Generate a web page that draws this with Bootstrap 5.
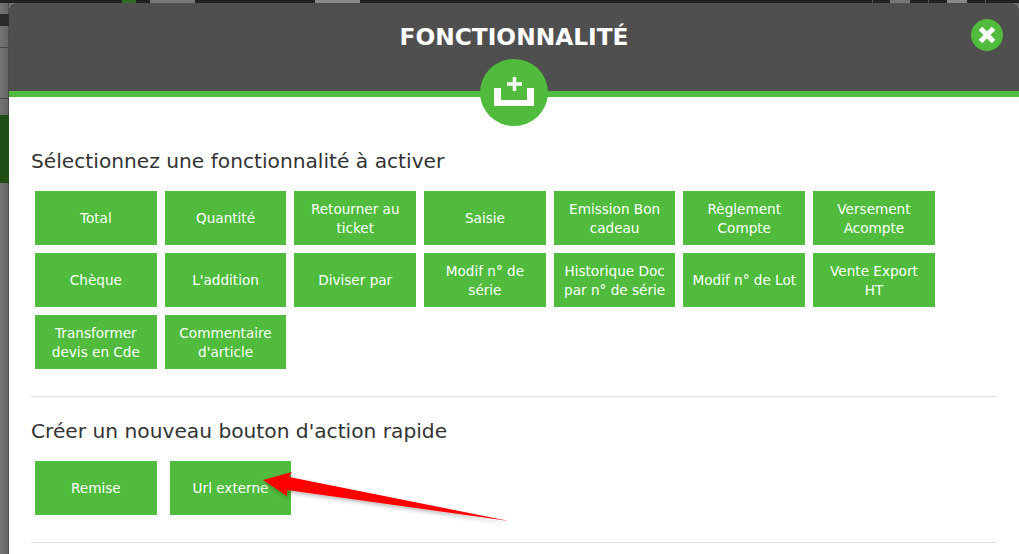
<!DOCTYPE html>
<html lang="fr">
<head>
<meta charset="utf-8">
<title>Fonctionnalité</title>
<link href="https://cdn.jsdelivr.net/npm/bootstrap@5.3.0/dist/css/bootstrap.min.css" rel="stylesheet">
<style>
html,body{height:100%;overflow:hidden}
body{background:#6b6b6b;font-family:"DejaVu Sans",sans-serif;color:#333}
.topstrip{height:3px;background:linear-gradient(90deg,#222 0 122px,#2f6b22 122px 136px,#222 136px 150px,#777 150px 195px,#222 195px 315px,#888 315px 360px,#222 360px 872px,#555 872px 873px,#222 873px 890px,#777 890px 910px,#222 910px 928px,#555 928px 929px,#222 929px 947px,#888 947px 967px,#222 967px 985px,#555 985px 986px,#222 986px)}
.sidebar-bg{width:9px;flex:none;background:linear-gradient(90deg,#747474,#666 85%,#3c3c3c)}
.band{background:#2a2a2a;height:12px;margin-top:11px}
.thin1{height:1px;background:#444;margin-top:21px}
.thin2{height:1px;background:#444;margin-top:50px}
.band-green{background:#1f4f14;height:68px;margin-top:16px}
.dialog{background:#fff;border-radius:6px 6px 0 0;flex:1 1 auto;min-width:0}
.dialog-head{height:94px;background:#4f4f4f;border-bottom:6px solid #50bb3d;border-radius:6px 6px 0 0;position:relative}
.dialog-title{font-size:23.3px;font-weight:700;color:#fff;line-height:26px;padding-top:21px;margin:0}
.close-disc,.head-disc{position:absolute;background:#50bb3d;border-radius:50%}
.close-disc{width:32px;height:32px;top:16px;right:16px;padding:0;border:0}
.head-disc{width:68px;height:67px;left:471px;top:56px}
.dialog-body{padding:0 22px}
.sec-title{font-size:20.2px;line-height:24px;font-weight:400;color:#333;margin:0}
.sec-first{padding-top:52px}
.sec-next{margin-top:22px}
.tile-grid{display:flex;flex-wrap:wrap;gap:8px;padding-left:4px;margin-top:18px}
.tile-grid-wide{gap:13px}
.tile{width:121.7px;height:54px;background:#50bb3d;color:#fff;font-size:13.6px;line-height:19px;border:0;border-radius:0;padding:1px 7px 0;display:flex;align-items:center;justify-content:center;text-align:center}
.rule{border-top:1px solid #ddd;opacity:1;margin:27px 0 0}
.arrow{position:absolute;left:0;top:0;pointer-events:none}
</style>
</head>
<body class="d-flex flex-column">
<div class="topstrip"></div>
<div class="d-flex flex-grow-1">
<div class="sidebar-bg"><div class="band"></div><div class="thin1"></div><div class="thin2"></div><div class="band-green"></div></div>
<div class="dialog">
<div class="dialog-head text-center">
<h1 class="dialog-title">FONCTIONNALITÉ</h1>
<button class="close-disc" aria-label="Fermer"><svg width="32" height="32" viewBox="0 0 32 32"><path d="M9.500 9.500 22.500 22.500M22.500 9.500 9.500 22.500" stroke="#fff" stroke-width="5" fill="none"/></svg></button>
<div class="head-disc"><svg width="68" height="67" viewBox="0 0 68 67"><path d="M14 29h7v12h26V29h7v18H14z" fill="#fff"/><path d="M27 25h15M34.500 18v14" stroke="#fff" stroke-width="3.500" fill="none"/></svg></div>
</div>
<div class="dialog-body">
<h2 class="sec-title sec-first">Sélectionnez une fonctionnalité à activer</h2>
<div class="tile-grid">
<button class="tile">Total</button><button class="tile">Quantité</button><button class="tile">Retourner au ticket</button><button class="tile">Saisie</button><button class="tile">Emission Bon cadeau</button><button class="tile">Règlement Compte</button><button class="tile">Versement Acompte</button>
<button class="tile">Chèque</button><button class="tile">L'addition</button><button class="tile">Diviser par</button><button class="tile">Modif n° de série</button><button class="tile">Historique Doc par n° de série</button><button class="tile">Modif n° de Lot</button><button class="tile">Vente Export HT</button>
<button class="tile">Transformer devis en Cde</button><button class="tile">Commentaire d'article</button>
</div>
<hr class="rule">
<h2 class="sec-title sec-next">Créer un nouveau bouton d'action rapide</h2>
<div class="tile-grid tile-grid-wide">
<button class="tile">Remise</button><button class="tile">Url externe</button>
</div>
<hr class="rule">
</div>
</div>
</div>
<svg class="arrow" width="1019" height="554" viewBox="0 0 1019 554"><defs><filter id="sh" x="-10%" y="-30%" width="120%" height="160%"><feDropShadow dx="1" dy="2" stdDeviation="2" flood-color="#000" flood-opacity=".3"/></filter></defs><path d="M263 480 292 472 289 477 509 521 287 490 287 496Z" fill="#f00" filter="url(#sh)"/></svg>
</body>
</html>
